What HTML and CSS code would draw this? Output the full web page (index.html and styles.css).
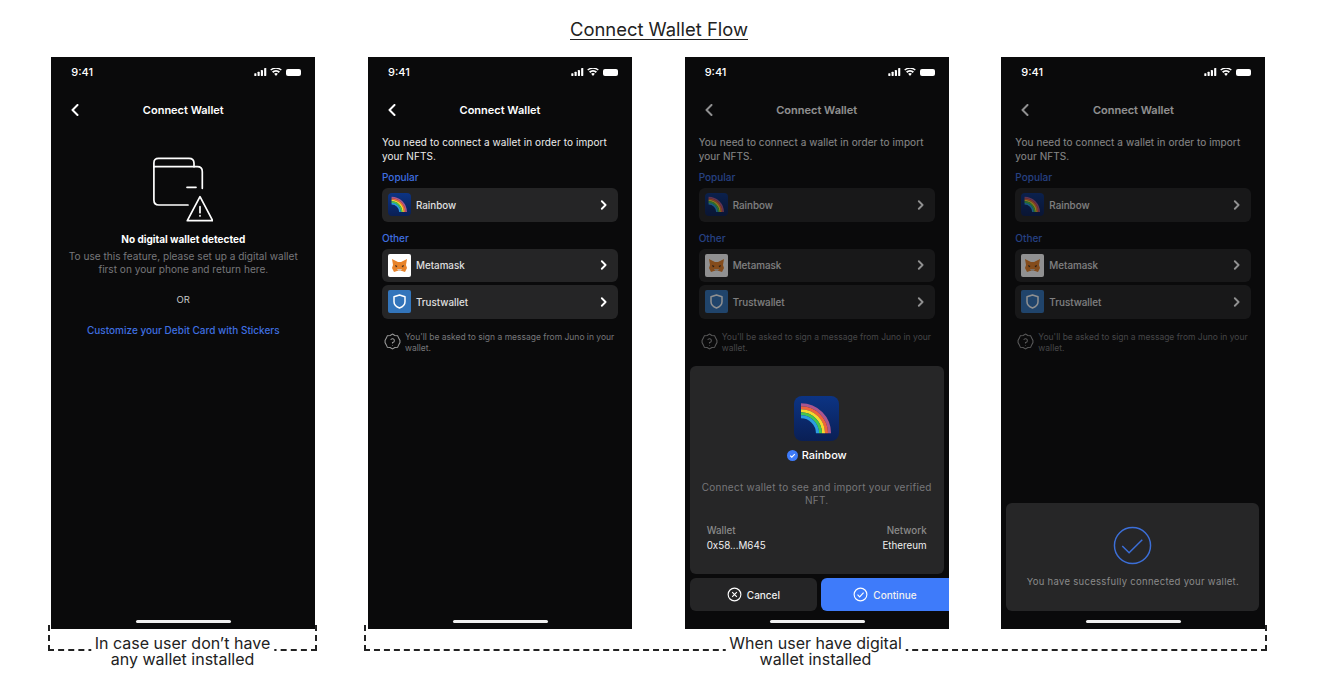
FILE: index.html

```html
<!DOCTYPE html>
<html lang="en">
<head>
    <meta charset="UTF-8">
    <meta name="viewport" content="width=device-width, initial-scale=1.0">
    <title>Connect Wallet Flow</title>
    <link rel="stylesheet" href="styles.css">
</head>
<body>
    <svg class="sprites" width="0" height="0" aria-hidden="true">
        <symbol id="i-signal" viewBox="0 0 14 9">
            <rect x="0" y="6" width="2.4" height="3" rx=".5"/>
            <rect x="3.7" y="4.2" width="2.4" height="4.8" rx=".5"/>
            <rect x="7.4" y="2.2" width="2.4" height="6.8" rx=".5"/>
            <rect x="11.1" y="0" width="2.4" height="9" rx=".5"/>
        </symbol>
        <symbol id="i-wifi" viewBox="0 0 13 9">
            <path d="M6.5 9 4.4 6.6a3.2 3.2 0 0 1 4.2 0zM3.4 5.5 2 4a6.8 6.8 0 0 1 9 0L9.6 5.5a4.8 4.8 0 0 0-6.2 0zM1 2.9 0 1.7a10 10 0 0 1 13 0L12 2.9a8.4 8.4 0 0 0-11 0z"/>
        </symbol>
        <symbol id="i-chevron" viewBox="0 0 8 12">
            <path d="M2 1.500 6.500 6 2 10.500" fill="none" stroke="currentColor" stroke-width="2.200" stroke-linecap="round" stroke-linejoin="round"/>
        </symbol>
        <symbol id="i-back" viewBox="0 0 8 12">
            <path d="M6.500 1 1.500 6l5 5" fill="none" stroke="currentColor" stroke-width="2" stroke-linecap="round" stroke-linejoin="round"/>
        </symbol>
        <symbol id="i-rainbow" viewBox="0 0 45 45">
            <defs>
                <linearGradient id="navy" x1="0" y1="0" x2="0" y2="1">
                    <stop offset="0" stop-color="#0c3484"/>
                    <stop offset="1" stop-color="#0a1f55"/>
                </linearGradient>
            </defs>
            <rect width="45" height="45" rx="8" fill="url(#navy)"/>
            <g fill="none" stroke-width="3.100">
                <path d="M7 8.800a28.500 28.500 0 0 1 28.500 28.500" stroke="#a9568f"/>
                <path d="M7 11.800a25.500 25.500 0 0 1 25.500 25.500" stroke="#f0623a"/>
                <path d="M7 14.800a22.500 22.500 0 0 1 22.500 22.500" stroke="#f8d62c"/>
                <path d="M7 17.800a19.500 19.500 0 0 1 19.500 19.500" stroke="#45c64c"/>
                <path d="M7 20.800a16.500 16.500 0 0 1 16.500 16.500" stroke="#2b9de0"/>
            </g>
        </symbol>
        <symbol id="i-fox" viewBox="0 0 23 23">
            <rect width="23" height="23" rx="2" fill="#fff"/>
            <path d="M4 5l6 3h3l6-3-1 6 1 3-2 4-3-1h-5l-3 1-2-4 1-3z" fill="#e8832a"/>
            <path d="M9 15h5l-1 2h-3z" fill="#d9c4b0"/>
            <path d="M7 11l2.500 1-1.500 1.500zM16 11l-2.500 1 1.500 1.500z" fill="#3a2a20"/>
        </symbol>
        <symbol id="i-shield" viewBox="0 0 23 23">
            <rect width="23" height="23" rx="2" fill="#3375bb"/>
            <path d="M11.500 5 17 6.800v5c0 3.200-2.300 5-5.500 6.200C8.300 16.800 6 15 6 11.800v-5z" fill="none" stroke="#fff" stroke-width="1.500" stroke-linejoin="round"/>
        </symbol>
        <symbol id="i-help" viewBox="0 0 16 16">
            <path d="M8 1l2.200 1.300 2.600.2 1 2.300L15 7v2l-1.200 2.200-1 2.300-2.600.2L8 15l-2.200-1.300-2.600-.2-1-2.300L1 9V7l1.200-2.200 1-2.300 2.600-.2z" fill="none" stroke="currentColor" stroke-width="1"/>
            <path d="M6.300 6.500A1.800 1.800 0 1 1 8 9v.8M8 11.300v.4" fill="none" stroke="currentColor" stroke-width="1"/>
        </symbol>
    </svg>

    <h1 class="page-title">Connect Wallet Flow</h1>

    <div class="phones">
        <!-- no wallet -->
        <div class="phone">
            <div class="status-bar">
                <span>9:41</span>
                <div class="status-icons">
                    <svg class="ic-signal"><use href="#i-signal"/></svg>
                    <svg class="ic-wifi"><use href="#i-wifi"/></svg>
                    <div class="battery"></div>
                </div>
            </div>
            <div class="nav">
                <svg class="back"><use href="#i-back"/></svg>
                <div class="nav-title">Connect Wallet</div>
            </div>
            <div class="empty">
                <svg class="empty-icon" viewBox="0 0 60 65" fill="none" stroke="#fff" stroke-width="1.700" stroke-linecap="round" stroke-linejoin="round">
                    <path d="M.9 9.700V6q0-4.700 4.700-4.700H36q5 0 5 5v3.400"/>
                    <path d="M.9 9.700H44.300q5 0 5 5V31.300"/>
                    <path d="M.9 9.700V43q0 5 5 5H35"/>
                    <path d="M34 30.300h9"/>
                    <path d="M47 39.700 59.700 63.700H34.300z"/>
                    <path d="M47 49.700v6M47 58.700v.3"/>
                </svg>
                <div class="empty-title">No digital wallet detected</div>
                <p class="empty-desc">To use this feature, please set up a digital wallet<br>first on your phone and return here.</p>
                <div class="empty-or">OR</div>
                <a class="empty-link">Customize your Debit Card with Stickers</a>
            </div>
            <div class="home-bar"></div>
        </div>

        <!-- wallet list -->
        <div class="phone">
            <div class="status-bar">
                <span>9:41</span>
                <div class="status-icons">
                    <svg class="ic-signal"><use href="#i-signal"/></svg>
                    <svg class="ic-wifi"><use href="#i-wifi"/></svg>
                    <div class="battery"></div>
                </div>
            </div>
            <div class="nav">
                <svg class="back"><use href="#i-back"/></svg>
                <div class="nav-title">Connect Wallet</div>
            </div>
            <div class="wallets">
                <p class="intro">You need to connect a wallet in order to import your NFTS.</p>
                <div class="group-label">Popular</div>
                <div class="wallet-row">
                    <svg class="wallet-logo"><use href="#i-rainbow"/></svg>
                    <span>Rainbow</span>
                    <svg class="chevron"><use href="#i-chevron"/></svg>
                </div>
                <div class="group-label other">Other</div>
                <div class="wallet-row">
                    <svg class="wallet-logo"><use href="#i-fox"/></svg>
                    <span>Metamask</span>
                    <svg class="chevron"><use href="#i-chevron"/></svg>
                </div>
                <div class="wallet-row">
                    <svg class="wallet-logo"><use href="#i-shield"/></svg>
                    <span>Trustwallet</span>
                    <svg class="chevron"><use href="#i-chevron"/></svg>
                </div>
                <div class="note">
                    <svg class="help"><use href="#i-help"/></svg>
                    <p>You'll be asked to sign a message from Juno in your wallet.</p>
                </div>
            </div>
            <div class="home-bar"></div>
        </div>

        <!-- confirm sheet -->
        <div class="phone">
            <div class="status-bar">
                <span>9:41</span>
                <div class="status-icons">
                    <svg class="ic-signal"><use href="#i-signal"/></svg>
                    <svg class="ic-wifi"><use href="#i-wifi"/></svg>
                    <div class="battery"></div>
                </div>
            </div>
            <div class="dim">
                <div class="nav">
                    <svg class="back"><use href="#i-back"/></svg>
                    <div class="nav-title">Connect Wallet</div>
                </div>
                <div class="wallets">
                    <p class="intro">You need to connect a wallet in order to import your NFTS.</p>
                    <div class="group-label">Popular</div>
                    <div class="wallet-row">
                        <svg class="wallet-logo"><use href="#i-rainbow"/></svg>
                        <span>Rainbow</span>
                        <svg class="chevron"><use href="#i-chevron"/></svg>
                    </div>
                    <div class="group-label other">Other</div>
                    <div class="wallet-row">
                        <svg class="wallet-logo"><use href="#i-fox"/></svg>
                        <span>Metamask</span>
                        <svg class="chevron"><use href="#i-chevron"/></svg>
                    </div>
                    <div class="wallet-row">
                        <svg class="wallet-logo"><use href="#i-shield"/></svg>
                        <span>Trustwallet</span>
                        <svg class="chevron"><use href="#i-chevron"/></svg>
                    </div>
                    <div class="note">
                        <svg class="help"><use href="#i-help"/></svg>
                        <p>You'll be asked to sign a message from Juno in your wallet.</p>
                    </div>
                </div>
            </div>
            <div class="confirm">
                <div class="sheet">
                    <svg class="sheet-logo"><use href="#i-rainbow"/></svg>
                    <div class="verified">
                        <svg class="badge" viewBox="0 0 11 11">
                            <circle cx="5.500" cy="5.500" r="5.500" fill="#3e7bfa"/>
                            <path d="M3.200 5.600l1.600 1.600 3-3" fill="none" stroke="#fff" stroke-width="1.100"/>
                        </svg>
                        <span>Rainbow</span>
                    </div>
                    <p class="sheet-text">Connect wallet to see and import your verified NFT.</p>
                    <div class="details">
                        <div>
                            <div class="detail-label">Wallet</div>
                            <div class="detail-value">0x58...M645</div>
                        </div>
                        <div class="detail-right">
                            <div class="detail-label">Network</div>
                            <div class="detail-value">Ethereum</div>
                        </div>
                    </div>
                </div>
                <div class="actions">
                    <button class="btn btn-cancel">
                        <svg viewBox="0 0 16 16" fill="none" stroke="#fff" stroke-width="1.200"><circle cx="8" cy="8" r="6.800"/><path d="M5.500 5.500l5 5M10.500 5.500l-5 5"/></svg>
                        Cancel
                    </button>
                    <button class="btn btn-continue">
                        <svg viewBox="0 0 16 16" fill="none" stroke="#fff" stroke-width="1.200"><circle cx="8" cy="8" r="6.800"/><path d="M4.800 8.200l2.300 2.300 4.200-4.500"/></svg>
                        Continue
                    </button>
                </div>
            </div>
            <div class="home-bar"></div>
        </div>

        <!-- connected -->
        <div class="phone">
            <div class="status-bar">
                <span>9:41</span>
                <div class="status-icons">
                    <svg class="ic-signal"><use href="#i-signal"/></svg>
                    <svg class="ic-wifi"><use href="#i-wifi"/></svg>
                    <div class="battery"></div>
                </div>
            </div>
            <div class="dim">
                <div class="nav">
                    <svg class="back"><use href="#i-back"/></svg>
                    <div class="nav-title">Connect Wallet</div>
                </div>
                <div class="wallets">
                    <p class="intro">You need to connect a wallet in order to import your NFTS.</p>
                    <div class="group-label">Popular</div>
                    <div class="wallet-row">
                        <svg class="wallet-logo"><use href="#i-rainbow"/></svg>
                        <span>Rainbow</span>
                        <svg class="chevron"><use href="#i-chevron"/></svg>
                    </div>
                    <div class="group-label other">Other</div>
                    <div class="wallet-row">
                        <svg class="wallet-logo"><use href="#i-fox"/></svg>
                        <span>Metamask</span>
                        <svg class="chevron"><use href="#i-chevron"/></svg>
                    </div>
                    <div class="wallet-row">
                        <svg class="wallet-logo"><use href="#i-shield"/></svg>
                        <span>Trustwallet</span>
                        <svg class="chevron"><use href="#i-chevron"/></svg>
                    </div>
                    <div class="note">
                        <svg class="help"><use href="#i-help"/></svg>
                        <p>You'll be asked to sign a message from Juno in your wallet.</p>
                    </div>
                </div>
            </div>
            <div class="success">
                <svg class="success-icon" viewBox="0 0 40 40" fill="none" stroke="#3c6fd8" stroke-width="1.500">
                    <circle cx="20" cy="20" r="18.500"/>
                    <path d="M9.500 20.500l7 7L30 14"/>
                </svg>
                <p>You have sucessfully connected your wallet.</p>
            </div>
            <div class="home-bar"></div>
        </div>
    </div>

    <div class="brackets">
        <div class="bracket bracket-none">
            <div class="caption">In case user don’t have<br>any wallet installed</div>
        </div>
        <div class="bracket bracket-has">
            <div class="caption">When user have digital<br>wallet installed</div>
        </div>
    </div>
</body>
</html>
```

FILE: styles.css

```css
body {
    margin: 0;
    background-color: #fff;
    color: #222;
    font-family: "Inter", "Liberation Sans", sans-serif;
}
.sprites {
    position: absolute;
}
.page-title {
    margin: 0;
    padding-top: 20px;
    height: 20px;
    margin-bottom: 17px;
    font-size: 18.400px;
    line-height: 19px;
    font-weight: 400;
    text-align: center;
    text-decoration: underline;
    text-underline-offset: 3px;
    text-decoration-thickness: 1px;
}
.phones {
    display: flex;
    gap: 52.700px;
    padding-left: 51.300px;
}
.phone {
    position: relative;
    width: 264px;
    height: 572px;
    background-color: #0a0a0b;
    color: #fff;
    overflow: hidden;
    font-size: 10px;
}
.status-bar {
    display: flex;
    justify-content: space-between;
    align-items: center;
    height: 30px;
    padding: 0 14px 0 20px;
    margin-bottom: 11px;
    font-size: 11px;
    font-weight: 500;
}
.status-icons {
    display: flex;
    align-items: center;
    gap: 3px;
}
.ic-signal {
    width: 13px;
    height: 8px;
    fill: #fff;
}
.ic-wifi {
    width: 12px;
    height: 8px;
    fill: #fff;
}
.battery {
    width: 15px;
    height: 7px;
    margin-left: 1px;
    border-radius: 2px;
    background-color: #fff;
}
.nav {
    position: relative;
    height: 24px;
    display: flex;
    align-items: center;
    justify-content: center;
}
.back {
    position: absolute;
    left: 20px;
    top: 6px;
    width: 8px;
    height: 12px;
    color: #fff;
}
.nav-title {
    font-size: 11px;
    font-weight: 600;
}
.home-bar {
    position: absolute;
    left: 85px;
    bottom: 6px;
    width: 95px;
    height: 3px;
    border-radius: 2px;
    background-color: #f0f0f0;
}

/* empty state */
.empty {
    text-align: center;
}
.empty-icon {
    display: block;
    width: 60px;
    height: 65px;
    margin: 35px auto 0 102px;
}
.empty-title {
    margin-top: 10px;
    line-height: 14px;
    font-size: 10px;
    font-weight: 700;
}
.empty-desc {
    margin: 4px 0 0;
    line-height: 13px;
    font-size: 10.100px;
    color: #77777a;
}
.empty-or {
    margin-top: 17px;
    line-height: 14px;
    font-size: 9.500px;
    color: #c8c8c8;
}
.empty-link {
    display: block;
    margin-top: 16px;
    line-height: 14px;
    font-size: 10px;
    font-weight: 500;
    color: #3f6fe0;
}

/* wallet list */
.wallets {
    padding: 13px 14px 0;
}
.intro {
    margin: 0;
    line-height: 14px;
    font-size: 10px;
    letter-spacing: .08px;
    color: #ededed;
}
.group-label {
    margin: 7px 0 4px;
    line-height: 14px;
    font-size: 10px;
    font-weight: 500;
    color: #3f6fe0;
}
.group-label.other {
    margin-top: 9px;
}
.wallet-row {
    display: flex;
    align-items: center;
    gap: 5px;
    height: 33.500px;
    margin-bottom: 3px;
    padding: 0 11px 0 6px;
    border-radius: 6px;
    background-color: #252526;
    font-size: 9.800px;
    font-weight: 500;
    color: #e0e0e0;
}
.wallet-row span {
    padding-top: 1px;
}
.wallet-logo {
    width: 23px;
    height: 23px;
    flex: none;
}
.chevron {
    width: 7px;
    height: 10px;
    margin-left: auto;
    color: #fff;
}
.note {
    display: flex;
    align-items: flex-start;
    gap: 4px;
    margin-top: 13px;
    padding-left: 2px;
    color: #77777a;
}
.help {
    width: 17px;
    height: 17px;
    flex: none;
    margin-top: 1px;
    color: #9a9a9a;
}
.note p {
    margin: 0;
    line-height: 11px;
    font-size: 8.500px;
}
.dim {
    opacity: .55;
}

/* confirm sheet */
.confirm {
    position: absolute;
    left: 5px;
    right: 0;
    bottom: 18px;
    display: flex;
    flex-direction: column;
    gap: 4px;
}
.sheet {
    height: 208px;
    margin-right: 5px;
    border-radius: 6px;
    background-color: #262627;
    text-align: center;
    box-sizing: border-box;
    padding-top: 30px;
}
.sheet-logo {
    display: block;
    width: 45px;
    height: 45px;
    margin: 0 auto;
}
.verified {
    display: flex;
    align-items: center;
    justify-content: center;
    gap: 4px;
    margin-top: 7px;
    line-height: 14px;
    font-size: 11px;
    font-weight: 500;
}
.badge {
    width: 11px;
    height: 11px;
}
.sheet-text {
    margin: 19px 10px 0;
    line-height: 13px;
    font-size: 10px;
    letter-spacing: .25px;
    color: #77777a;
}
.details {
    display: flex;
    justify-content: space-between;
    margin-top: 16px;
    padding: 0 17px;
    font-size: 9.800px;
    text-align: left;
}
.detail-right {
    text-align: right;
}
.detail-label {
    line-height: 15px;
    font-weight: 500;
    color: #8a8a8a;
}
.detail-value {
    line-height: 15px;
    color: #f0f0f0;
}
.actions {
    display: flex;
    gap: 4px;
}
.btn {
    flex: 1;
    display: flex;
    align-items: center;
    justify-content: center;
    gap: 5px;
    height: 33px;
    border: none;
    border-radius: 6px;
    font-family: inherit;
    font-size: 10px;
    font-weight: 500;
    color: #f0f0f0;
}
.btn svg {
    width: 15px;
    height: 15px;
}
.btn-cancel {
    background-color: #252526;
}
.btn-continue {
    background-color: #3e7bfa;
    border-radius: 6px 0 0 6px;
}

/* success */
.success {
    position: absolute;
    left: 5px;
    right: 6px;
    bottom: 18px;
    height: 108px;
    box-sizing: border-box;
    padding-top: 23px;
    border-radius: 6px;
    background-color: #262627;
    text-align: center;
}
.success-icon {
    display: block;
    width: 39px;
    height: 39px;
    margin: 0 auto;
}
.success p {
    margin: 10px 0 0;
    line-height: 13px;
    font-size: 9.500px;
    letter-spacing: .3px;
    color: #8a8a8a;
}

/* dashed brackets under the phones */
.brackets {
    display: flex;
    gap: 47px;
    margin-top: -4px;
    padding-left: 48px;
    min-height: 58px;
}
.bracket {
    position: relative;
    height: 24px;
    border: 2px dashed #222;
    border-top: none;
}
.bracket-none {
    width: 265px;
}
.bracket-has {
    width: 899px;
}
.caption {
    position: absolute;
    left: 50%;
    top: 10px;
    transform: translateX(-50%);
    padding: 0 4px;
    background-color: #fff;
    white-space: nowrap;
    text-align: center;
    font-size: 16px;
    line-height: 16px;
    font-weight: 400;
}
```
